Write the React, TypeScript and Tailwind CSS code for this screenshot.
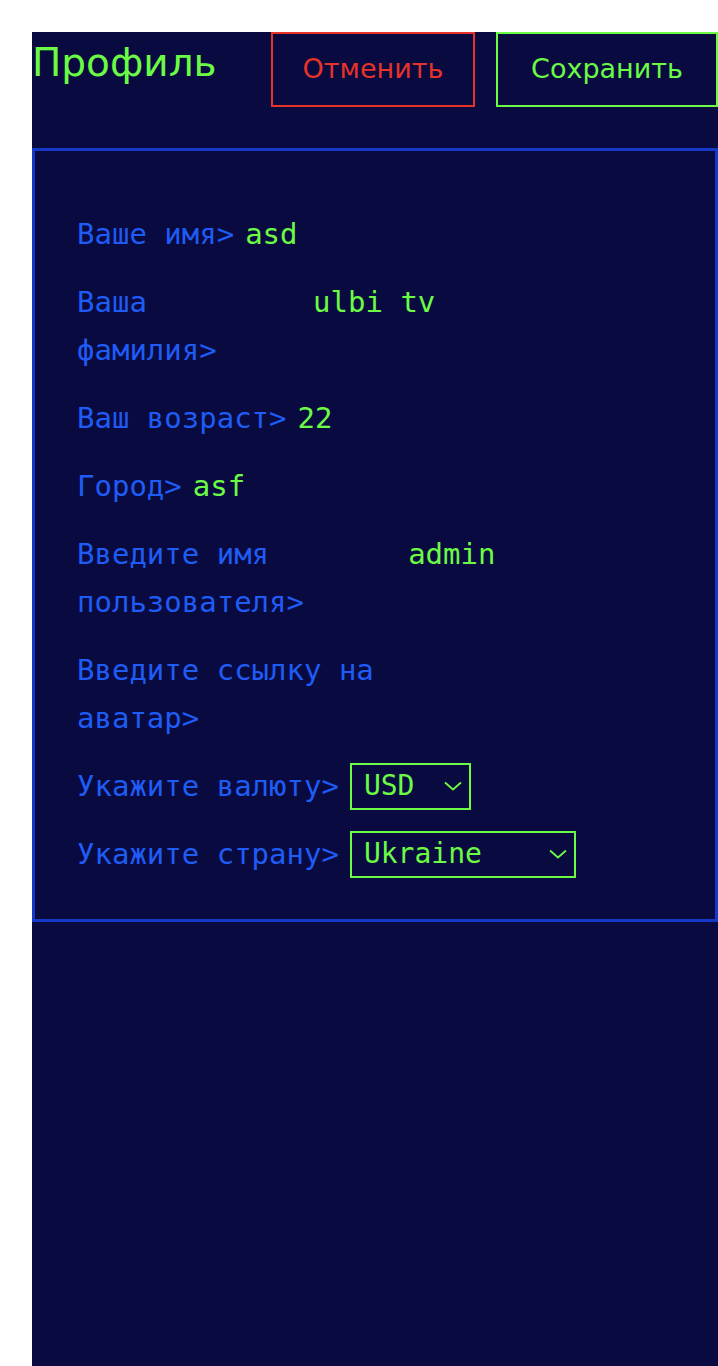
import React from "react";

const mono = { fontFamily: '"DejaVu Sans Mono", "Liberation Mono", monospace' };

function Chevron() {
  return (
    <svg width="18" height="10" viewBox="0 0 18 10" fill="none" className="shrink-0">
      <polyline points="1,1.5 9,8.5 17,1.5" stroke="#6cfb45" strokeWidth="1.8" fill="none" />
    </svg>
  );
}

function Row({ label, value }: { label: string; value: string }) {
  return (
    <div className="flex items-start gap-[11px]">
      <span className="shrink text-[#1f5cf6] text-[29px] leading-[48px]">{label}</span>
      <input
        readOnly
        value={value}
        className="w-[368px] min-w-0 shrink h-[48px] p-0 m-0 bg-transparent border-0 outline-none text-[#6cfb45] text-[29px] leading-[48px]"
        style={mono}
      />
    </div>
  );
}

function SelectRow({ label, value, width }: { label: string; value: string; width: string }) {
  return (
    <div className="flex items-center gap-[11px] h-[48px]">
      <span className="shrink-0 text-[#1f5cf6] text-[29px] leading-[48px]">{label}</span>
      <div className={`${width} h-[47px] border-[2px] border-[#6cfb45] flex items-center justify-between pl-[12px] pr-[7px]`}>
        <span className="text-[#6cfb45] text-[28px] leading-none">{value}</span>
        <Chevron />
      </div>
    </div>
  );
}

export default function App() {
  return (
    <div className="min-h-[1366px] bg-white pl-[32px] pt-[32px]">
      <div className="min-h-[1334px] bg-[#090a40]">
        <div className="flex justify-between items-start" style={{ fontFamily: '"DejaVu Sans", Verdana, sans-serif' }}>
          <h1 className="text-[39px] leading-[48px] mt-[7px] text-[#6cfb45] font-normal">Профиль</h1>
          <div className="flex gap-[21px]">
            <button className="w-[204px] h-[75px] border-2 border-[#e5332a] text-[#e5332a] text-[27px] bg-transparent">
              Отменить
            </button>
            <button className="w-[222px] h-[75px] border-2 border-[#6cfb45] text-[#6cfb45] text-[27px] bg-transparent">
              Сохранить
            </button>
          </div>
        </div>
        <div
          className="mt-[41px] border-[3px] border-[#1538c8] pt-[59px] pb-[41px] pl-[42px] pr-[37px] flex flex-col gap-[20px]"
          style={mono}
        >
          <Row label="Ваше имя>" value="asd" />
          <Row label="Ваша фамилия>" value="ulbi tv" />
          <Row label="Ваш возраст>" value="22" />
          <Row label="Город>" value="asf" />
          <Row label="Введите имя пользователя>" value="admin" />
          <Row label="Введите ссылку на аватар>" value="" />
          <SelectRow label="Укажите валюту>" value="USD" width="w-[121px]" />
          <SelectRow label="Укажите страну>" value="Ukraine" width="w-[226px]" />
        </div>
      </div>
    </div>
  );
}
